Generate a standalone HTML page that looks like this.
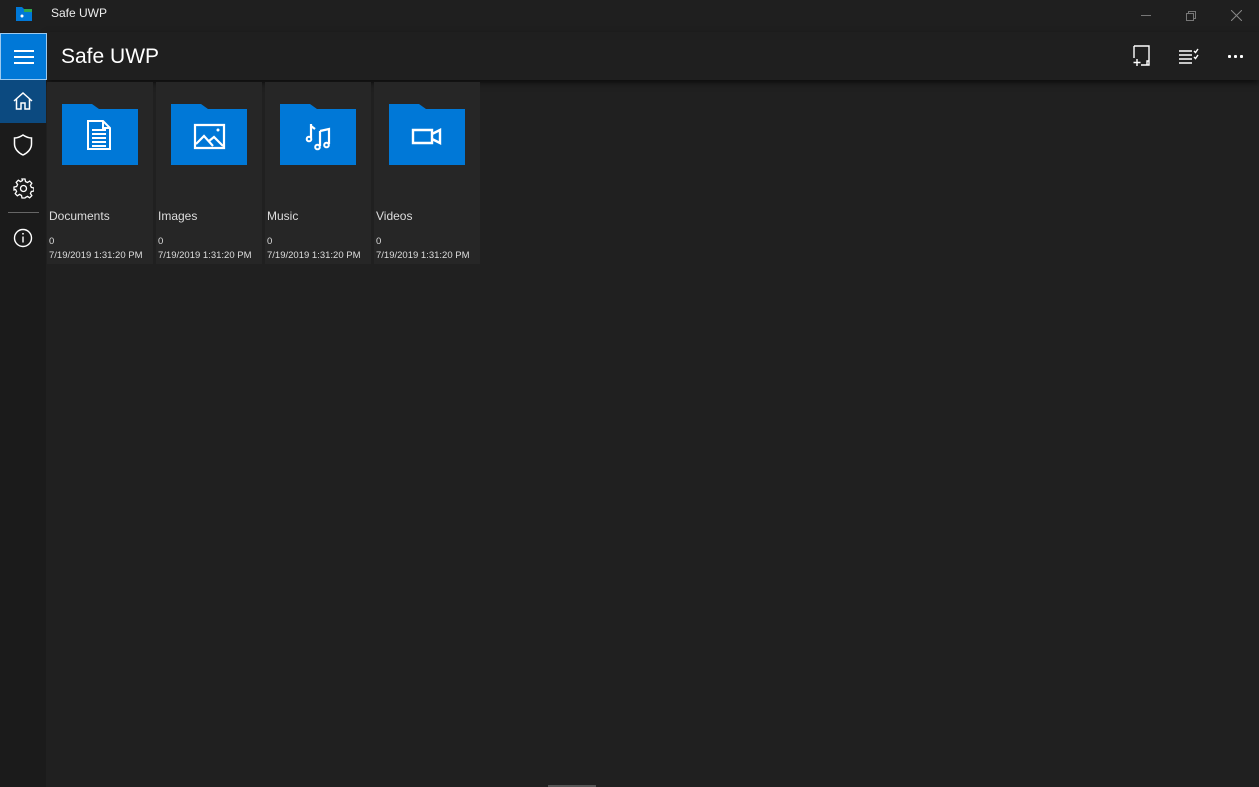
<!DOCTYPE html>
<html><head><meta charset="utf-8"><style>
*{margin:0;padding:0;box-sizing:border-box}
body{width:1259px;height:787px;background:#202020;font-family:"Segoe UI","Liberation Sans",sans-serif;color:#fff;position:relative;overflow:hidden}
.abs{position:absolute}
.tile{position:absolute;top:82px;width:106px;height:182px;background:#262626}
.tile .nm{position:absolute;left:2px;top:127px;font-size:12px;color:#ddd}
.tile .c{position:absolute;left:2px;top:154px;font-size:9.5px;color:#ddd}
.tile .d{position:absolute;left:2px;top:168px;font-size:9.5px;color:#ddd;white-space:nowrap}
.tile svg{position:absolute;left:15px;top:22px}
</style></head><body>
<div class="abs" style="left:0;top:0;width:1259px;height:32px;background:#1f1f1f"></div>
<svg class="abs" style="left:15px;top:6px" width="18" height="16"><path d="M1 1h6l2 2h8v12H1z" fill="#0078d7"/><rect x="9" y="3" width="8" height="3" fill="#2fa84f"/><circle cx="7" cy="10" r="1.5" fill="#fff"/></svg>
<div class="abs" style="left:51px;top:6px;font-size:12px;color:#eee">Safe UWP</div>
<div class="abs" style="left:1141px;top:15px;width:10px;height:1px;background:#777"></div>
<svg class="abs" style="left:1185px;top:10px" width="12" height="12" fill="none" stroke="#777"><rect x="1.5" y="3.5" width="7" height="7"/><path d="M3.5 3.5V1.5h7v7h-2"/></svg>
<svg class="abs" style="left:1231px;top:10px" width="11" height="11" stroke="#888"><path d="M0 0L11 11M11 0L0 11"/></svg>
<div class="abs" style="left:46px;top:32px;width:1213px;height:48px;background:#1f1f1f;box-shadow:0 3px 6px rgba(0,0,0,.6)"></div>
<div class="abs" style="left:0;top:32px;width:46px;height:755px;background:#1b1b1b"></div>
<div class="abs" style="left:0;top:33px;width:47px;height:47px;background:#0078d7;border:1px solid #9ccaf0"></div>
<div class="abs" style="left:14px;top:50px;width:20px;height:2px;background:#fff;box-shadow:0 6px 0 #fff,0 12px 0 #fff"></div>
<div class="abs" style="left:0;top:80px;width:46px;height:43px;background:#0c4a80"></div>
<svg class="abs" style="left:13px;top:91px" width="20" height="20" fill="none" stroke="#fff" stroke-width="1.5"><path d="M1 10L10 2l9 8M3.5 8v10h4.5v-6h4v6h4.5V8"/></svg>
<svg class="abs" style="left:13px;top:134px" width="20" height="22" fill="none" stroke="#fff" stroke-width="1.5"><path d="M10 1C7 3 4 4 1.5 4v6c0 5 4 9 8.5 11 4.5-2 8.5-6 8.5-11V4C16 4 13 3 10 1z"/></svg>
<svg class="abs" style="left:13px;top:178px" width="21" height="21" fill="none" stroke="#fff" stroke-width="1.3"><circle cx="10.5" cy="10.5" r="3"/><path d="M9 1h3l.5 2.5 2 1 2.2-1.4 2.1 2.1-1.4 2.2 1 2 2.6.6v3l-2.6.5-1 2 1.4 2.2-2.1 2.1-2.2-1.4-2 1L12 20H9l-.5-2.6-2-1-2.2 1.4-2.1-2.1 1.4-2.2-1-2L1 12V9l2.6-.5 1-2-1.4-2.2 2.1-2.1 2.2 1.4 2-1z"/></svg>
<div class="abs" style="left:8px;top:212px;width:31px;height:1px;background:#666"></div>
<svg class="abs" style="left:13px;top:228px" width="20" height="20" fill="none" stroke="#fff" stroke-width="1.4"><circle cx="10" cy="10" r="8.5"/><path d="M10 8.5v6"/><circle cx="10" cy="5.8" r=".9" fill="#fff" stroke="none"/></svg>
<div class="abs" style="left:61px;top:45px;font-size:21px;color:#fff">Safe UWP</div>
<svg class="abs" style="left:1131px;top:45px" width="22" height="22" fill="none" stroke="#fff" stroke-width="1.4"><path d="M3 1h15v19h-8M3 1v12M6 14v7M2.5 17.5h7M16 16v4h2v-4z"/></svg>
<svg class="abs" style="left:1178px;top:47px" width="22" height="18" fill="none" stroke="#fff" stroke-width="1.4"><path d="M1 4h13M1 8h13M1 12h13M1 16h13M16 4l1.5 1.5L20 2M16 10l1.5 1.5L20 8"/></svg>
<div class="abs" style="left:1228px;top:55px;width:3px;height:3px;background:#fff;box-shadow:6px 0 0 #fff,12px 0 0 #fff;border-radius:1px"></div>
<div class="tile" style="left:47px"><svg width="76" height="61"><path d="M0 0h30l7 5h39v56H0z" fill="#0078d7"/><path d="M26 17h15l7 7v21H26z M41 17v7h7 M30 26h14M30 30h14M30 34h14M30 38h14M30 42h14" fill="none" stroke="#fff" stroke-width="2"/></svg><div class="nm">Documents</div><div class="c">0</div><div class="d">7/19/2019 1:31:20 PM</div></div>
<div class="tile" style="left:156px"><svg width="76" height="61"><path d="M0 0h30l7 5h39v56H0z" fill="#0078d7"/><path d="M24 21h29v23H24z M25 40l8-8 9 10 M38 37l5-4 9 9" fill="none" stroke="#fff" stroke-width="2.2"/><circle cx="47" cy="26" r="1.5" fill="#fff"/></svg><div class="nm">Images</div><div class="c">0</div><div class="d">7/19/2019 1:31:20 PM</div></div>
<div class="tile" style="left:265px"><svg width="76" height="61"><path d="M0 0h30l7 5h39v56H0z" fill="#0078d7"/><path d="M31 20v14M31 22l4 3M40 27v15M40 27l9-2v15" fill="none" stroke="#fff" stroke-width="2.2"/><circle cx="29" cy="35" r="2.3" fill="none" stroke="#fff" stroke-width="2"/><circle cx="37.5" cy="43" r="2.3" fill="none" stroke="#fff" stroke-width="2"/><circle cx="46.5" cy="41" r="2.3" fill="none" stroke="#fff" stroke-width="2"/></svg><div class="nm">Music</div><div class="c">0</div><div class="d">7/19/2019 1:31:20 PM</div></div>
<div class="tile" style="left:374px"><svg width="76" height="61"><path d="M0 0h30l7 5h39v56H0z" fill="#0078d7"/><path d="M24 26h19v13H24z M43 30l8-4v13l-8-4" fill="none" stroke="#fff" stroke-width="2.4"/></svg><div class="nm">Videos</div><div class="c">0</div><div class="d">7/19/2019 1:31:20 PM</div></div>
<div class="abs" style="left:548px;top:785px;width:48px;height:2px;background:#555"></div>
</body></html>
